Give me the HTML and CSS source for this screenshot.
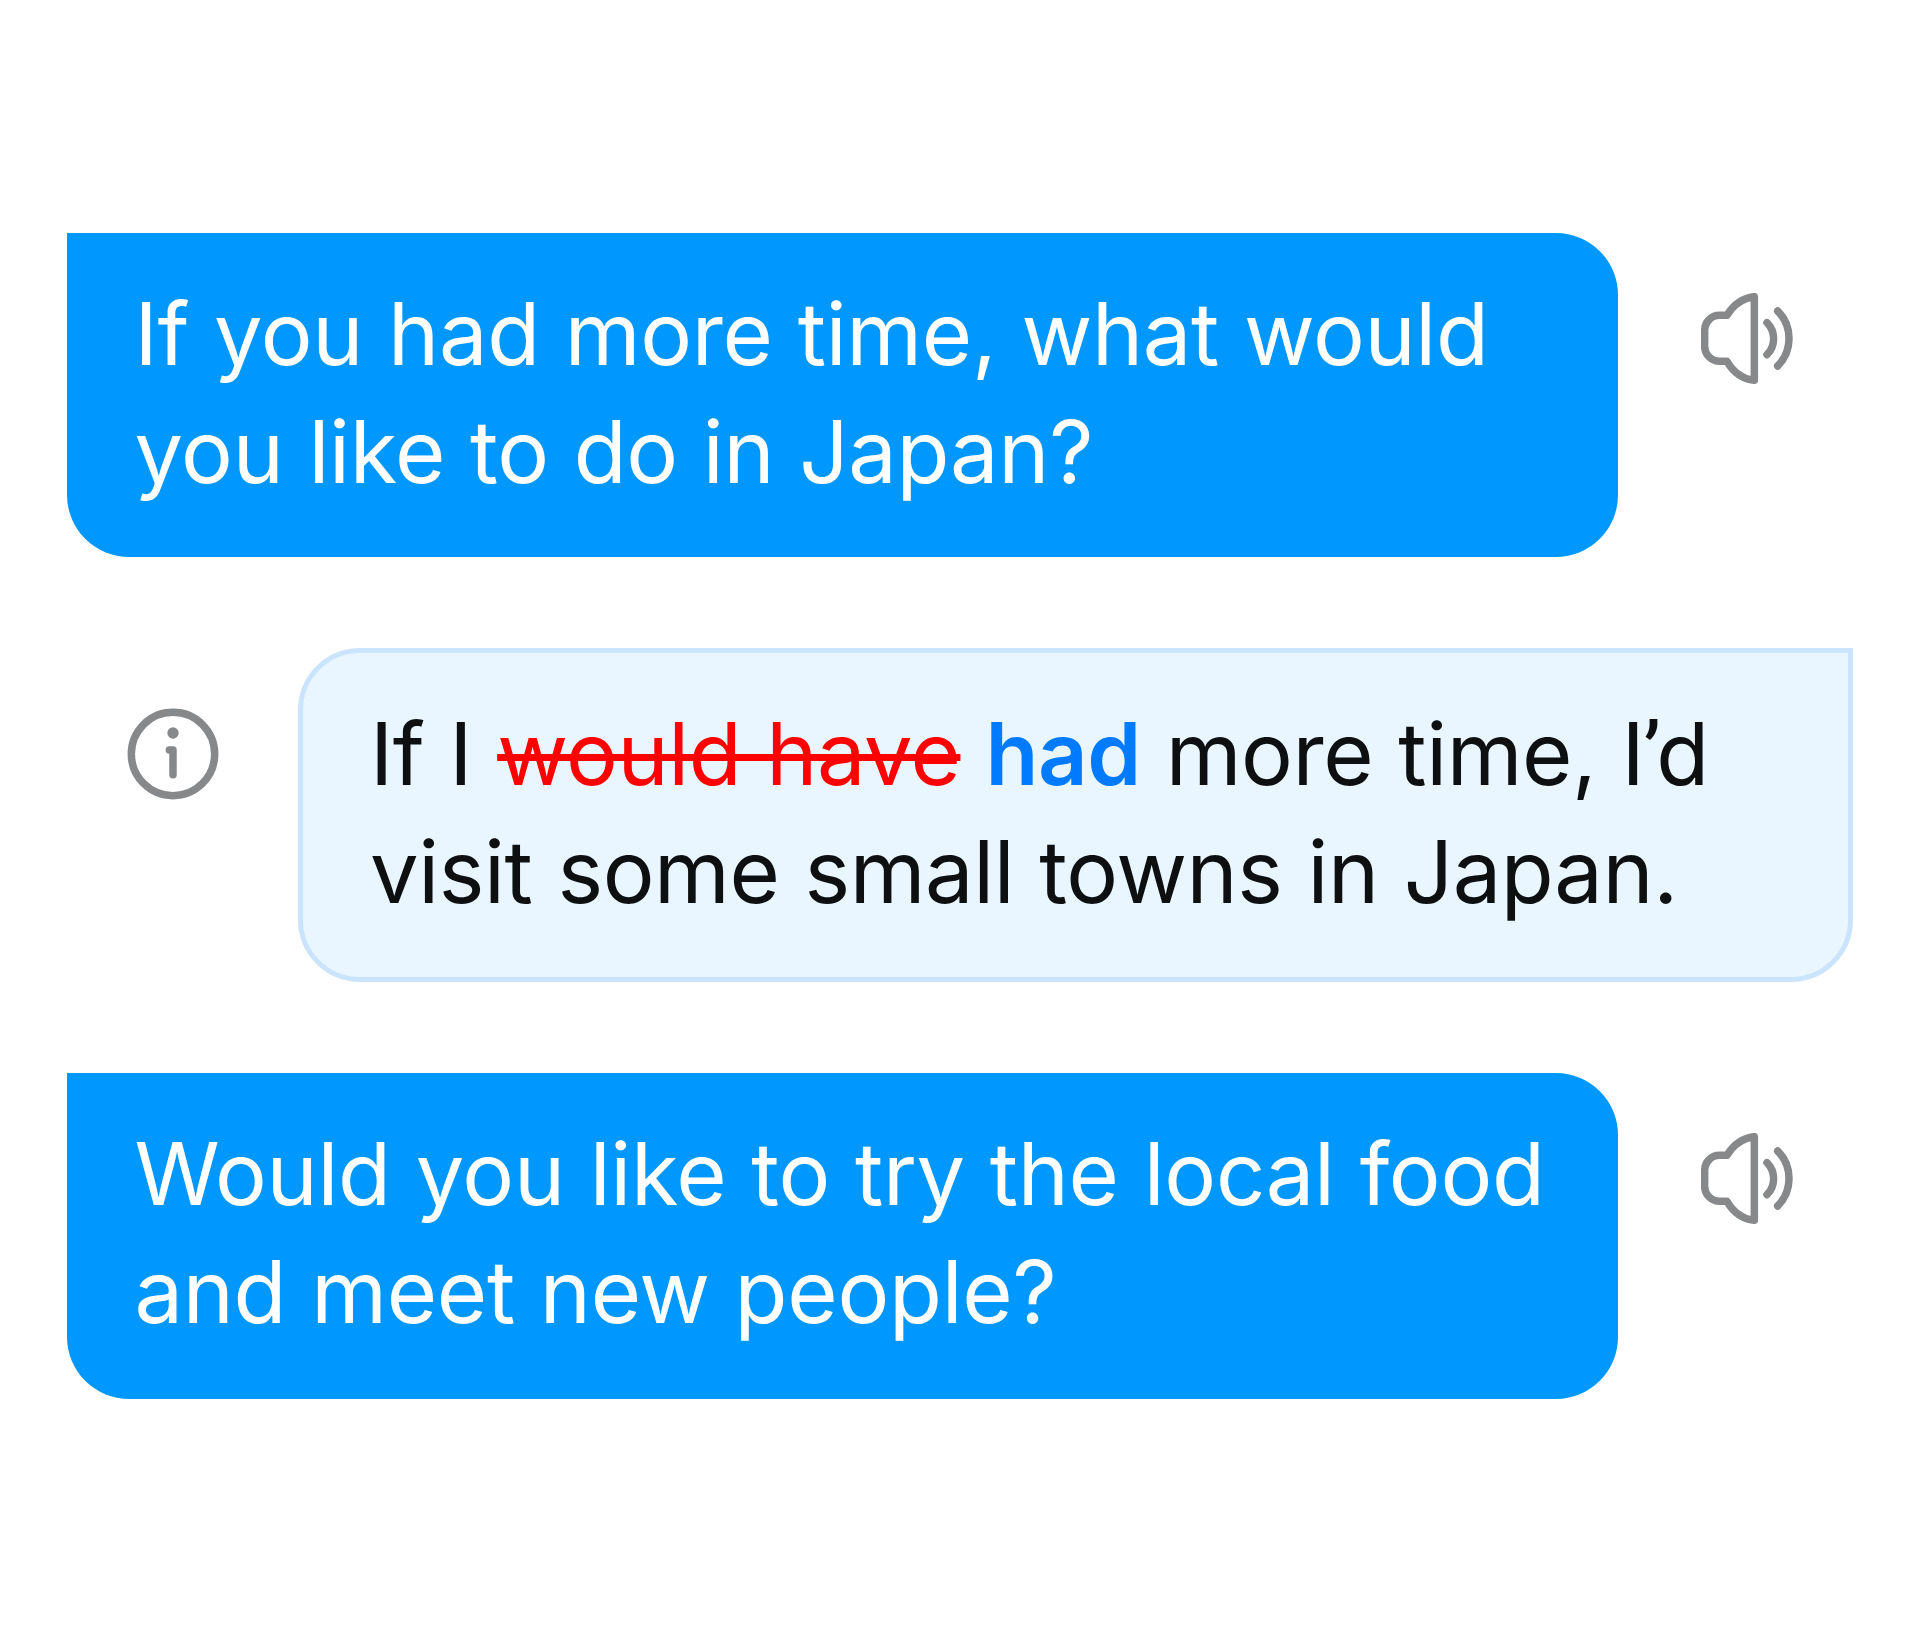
FILE: index.html
```html
<!DOCTYPE html>
<html lang="en">
<head>
  <meta charset="UTF-8">
  <title>English Chat Practice</title>
  <link rel="stylesheet" href="styles.css">
</head>
<body>

  <main class="chat">
    <div class="row">
      <p class="bubble bot">If you had more time, what would<br>you like to do in Japan?</p>
      <svg class="icon" viewBox="0 0 276 276" role="img" aria-label="Play audio">
        <path d="M160 11V262C126 258 97 238 78 205H56A45 45 0 0 1 11 160V112A45 45 0 0 1 56 67H78C97 35 126 15 160 11Z"/>
        <path d="M198 89A68 68 0 0 1 198 185"/>
        <path d="M230 54A117 117 0 0 1 230 219"/>
      </svg>
    </div>

    <div class="row reply">
      <svg class="icon" viewBox="0 0 276 276" role="img" aria-label="Show explanation">
        <circle cx="138" cy="138" r="125"/>
        <circle class="dot" cx="138" cy="75" r="17"/>
        <path d="M127 126H138V200"/>
      </svg>
      <p class="bubble user">If I <del>would have</del> <strong>had</strong> more time, I<span class="quote">’</span>d<br>visit some small towns in Japan.</p>
    </div>

    <div class="row">
      <p class="bubble bot last">Would you like to try the local food<br>and meet new people?</p>
      <svg class="icon" viewBox="0 0 276 276" role="img" aria-label="Play audio">
        <path d="M160 11V262C126 258 97 238 78 205H56A45 45 0 0 1 11 160V112A45 45 0 0 1 56 67H78C97 35 126 15 160 11Z"/>
        <path d="M198 89A68 68 0 0 1 198 185"/>
        <path d="M230 54A117 117 0 0 1 230 219"/>
      </svg>
    </div>
  </main>

</body>
</html>
```
FILE: styles.css
```css
* {
  box-sizing: border-box;
}
body {
  background-color: #fff;
  font-family: Inter, sans-serif;
  margin: 0;
}
.chat {
  display: flex;
  flex-direction: column;
  gap: 91px;
  padding: 233px 67px;
}
.row {
  display: flex;
  align-items: flex-start;
  gap: 83px;
}
.reply {
  justify-content: flex-end;
  gap: 79px;
}
/* Chat bubbles */
.bubble {
  margin: 0;
  font-size: 86.5px;
  line-height: 117.6px;
  white-space: nowrap;
}
.bot {
  width: 1551px;
  height: 324px;
  padding: 42px 0 0 67.5px;
  border-radius: 0 62px 62px 62px;
  background-color: #0098ff;
  color: #fff;
  letter-spacing: -0.3px;
  word-spacing: 0.9px;
}
.last {
  height: 326px;
}
.user {
  width: 1555px;
  height: 334px;
  padding: 42px 0 0 67px;
  border: 5px solid #cbe4fe;
  border-radius: 62px 0 62px 62px;
  background-color: #e9f6ff;
  color: #0d0f10;
  letter-spacing: -0.4px;
  word-spacing: 1px;
}
/* Corrections */
del {
  color: #f00;
  text-decoration: line-through;
  text-decoration-thickness: 7px;
}
strong {
  color: #007bff;
  font-weight: 600;
}
.quote {
  margin: 0 -4px 0 -1px;
  font-family: Roboto, sans-serif;
  line-height: 1;
}
/* Icons */
.icon {
  flex: none;
  width: 92px;
  height: 92px;
  margin-top: 60px;
  fill: none;
  stroke: #86888a;
  stroke-width: 22.5;
  stroke-linecap: round;
  stroke-linejoin: round;
}
.dot {
  fill: #86888a;
  stroke: none;
}
```
